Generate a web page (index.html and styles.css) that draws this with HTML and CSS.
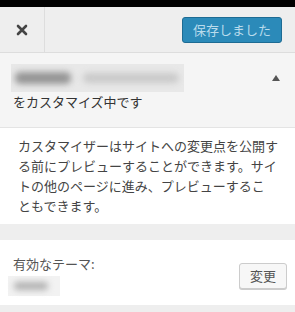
FILE: index.html
```html
<!DOCTYPE html>
<html>
<head>
    <title>カスタマイズ</title>
    <link rel="stylesheet" href="styles.css">
</head>
<body>
    <div class="topbar"></div>
    <div class="header">
        <div class="close">
            <svg width="12" height="12" viewBox="0 0 12 12"><path d="M2 2 L10 10 M10 2 L2 10" stroke="#444" stroke-width="2.6" stroke-linecap="round"/></svg>
        </div>
        <button class="save">保存しました</button>
    </div>
    <div class="info">
        <div class="info-top">
            <div class="blur-title">
                <span class="blob dark"></span>
                <span class="blob light"></span>
            </div>
            <span class="arrow"></span>
        </div>
        <div class="info-sub">をカスタマイズ中です</div>
    </div>
    <div class="desc">
        カスタマイザーはサイトへの変更点を公開する前にプレビューすることができます。サイトの他のページに進み、プレビューするこ<br>ともできます。
    </div>
    <div class="spacer"></div>
    <div class="theme">
        <div>
            <div class="theme-label">有効なテーマ:</div>
            <div class="blur-name"><span class="blob name"></span></div>
        </div>
        <button class="change">変更</button>
    </div>
</body>
</html>
```

FILE: styles.css
```css
body {
    margin: 0;
    width: 295px;
    height: 312px;
    overflow: hidden;
    background-color: #eeeeee;
    font-family: "Noto Sans CJK JP", "DejaVu Sans", sans-serif;
    font-size: 13px;
    color: #444;
}
.topbar {
    height: 7px;
    background-color: #000;
}
.header {
    display: flex;
    align-items: center;
    height: 45px;
    background-color: #eeeeee;
    border-bottom: 1px solid #dddddd;
}
.close {
    width: 45px;
    height: 45px;
    border-right: 1px solid #dddddd;
    display: flex;
    align-items: center;
    justify-content: center;
    box-sizing: border-box;
}
.save {
    margin-left: auto;
    margin-right: 13px;
    width: 100px;
    height: 26px;
    padding: 0;
    background-color: #2b8ab9;
    border: 1px solid #1d6b93;
    border-radius: 3px;
    color: #b9dbec;
    font-family: inherit;
    font-size: 13px;
    line-height: 24px;
}
.info {
    background-color: #f5f5f5;
    padding: 11px 0 0 11px;
    box-sizing: border-box;
    border-bottom: 1px solid #e4e4e4;
    height: 75px;
}
.info-top {
    display: flex;
    align-items: center;
}
.blur-title {
    width: 173px;
    height: 28px;
    background-color: #e8e8e8;
    display: flex;
    align-items: center;
    overflow: hidden;
}
.blob {
    display: block;
    height: 10px;
    border-radius: 5px;
    filter: blur(3px);
}
.blob.dark {
    width: 56px;
    height: 12px;
    margin-left: 4px;
    background-color: #959595;
}
.blob.light {
    width: 96px;
    margin-left: 12px;
    background-color: #c9c9c9;
}
.arrow {
    margin-left: auto;
    margin-right: 15px;
    width: 0;
    height: 0;
    border-left: 4px solid transparent;
    border-right: 4px solid transparent;
    border-bottom: 6px solid #555;
}
.info-sub {
    margin-top: 1px;
    line-height: 18px;
    color: #333;
    margin-left: 2px;
}
.desc {
    background-color: #fff;
    padding: 8px 14px 8px 18px;
    line-height: 20px;
    color: #444;
}
.spacer {
    height: 16px;
}
.theme {
    background-color: #fff;
    display: flex;
    align-items: center;
    justify-content: space-between;
    padding: 15px 8px 9px 13px;
}
.theme-label {
    color: #555;
    line-height: 18px;
}
.blur-name {
    margin-top: 3px;
    margin-left: -5px;
    width: 52px;
    height: 20px;
    background-color: #f2f2f2;
    display: flex;
    align-items: center;
}
.blob.name {
    width: 34px;
    margin-left: 6px;
    height: 8px;
    background-color: #b0b0b0;
}
.change {
    width: 48px;
    height: 26px;
    padding: 0;
    background-color: #f7f7f7;
    border: 1px solid #cccccc;
    border-radius: 3px;
    color: #555;
    font-family: inherit;
    font-size: 13px;
    box-shadow: 0 1px 0 #ccc;
}
```
